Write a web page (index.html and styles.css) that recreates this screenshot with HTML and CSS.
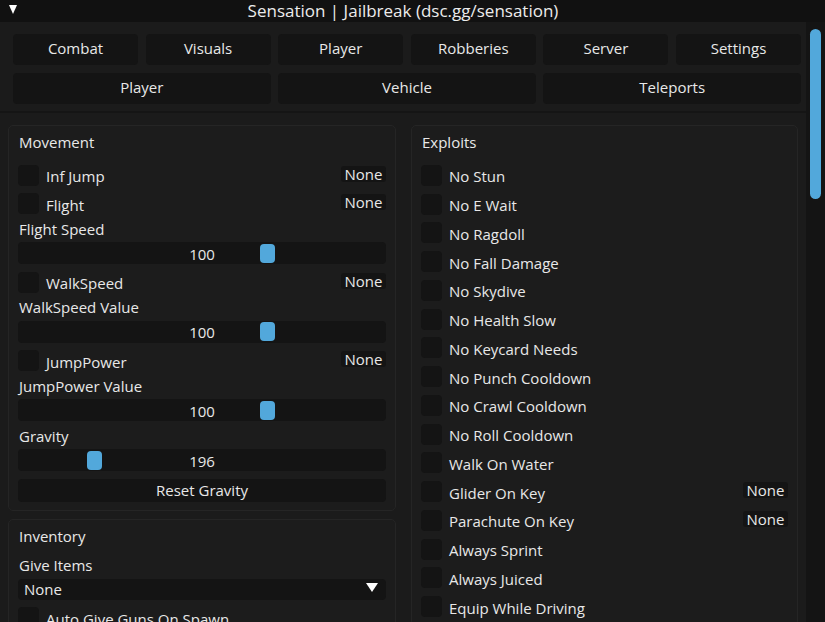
FILE: index.html
```html
<!DOCTYPE html>
<html>
<head>
<meta charset="utf-8">
<link rel="stylesheet" href="styles.css">
</head>
<body>
<div class="window">
  <div class="titlebar">
    <svg class="collapse" width="8" height="9" viewBox="0 0 8 9"><polygon points="0,0 8,0 4,9" fill="#fff"/></svg>
    <span class="title">Sensation | Jailbreak (dsc.gg/sensation)</span>
  </div>
  <div class="body">
    <div class="scroll">
      <div class="tabs">
        <div class="tabrow six">
          <div class="tab">Combat</div>
          <div class="tab">Visuals</div>
          <div class="tab">Player</div>
          <div class="tab">Robberies</div>
          <div class="tab">Server</div>
          <div class="tab">Settings</div>
        </div>
        <div class="tabrow three">
          <div class="tab">Player</div>
          <div class="tab">Vehicle</div>
          <div class="tab">Teleports</div>
        </div>
      </div>
      <div class="sep"></div>
      <div class="columns">
        <div class="col">
          <section class="panel left">
            <div class="ptitle">Movement</div>
            <div class="row"><span class="cb"></span><span class="lbl">Inf Jump</span><span class="key">None</span></div>
            <div class="row"><span class="cb"></span><span class="lbl">Flight</span><span class="key">None</span></div>
            <div class="label">Flight Speed</div>
            <div class="slider"><span class="thumb" style="left:242px"></span><span class="val">100</span></div>
            <div class="row"><span class="cb"></span><span class="lbl">WalkSpeed</span><span class="key">None</span></div>
            <div class="label">WalkSpeed Value</div>
            <div class="slider"><span class="thumb" style="left:242px"></span><span class="val">100</span></div>
            <div class="row"><span class="cb"></span><span class="lbl">JumpPower</span><span class="key">None</span></div>
            <div class="label">JumpPower Value</div>
            <div class="slider"><span class="thumb" style="left:242px"></span><span class="val">100</span></div>
            <div class="label">Gravity</div>
            <div class="slider"><span class="thumb" style="left:69px"></span><span class="val">196</span></div>
            <div class="button">Reset Gravity</div>
          </section>
          <section class="panel left">
            <div class="ptitle">Inventory</div>
            <div class="label">Give Items</div>
            <div class="dropdown"><span>None</span><svg width="12" height="9" viewBox="0 0 12 9"><polygon points="0,0 12,0 6,9" fill="#fff"/></svg></div>
            <div class="row"><span class="cb"></span><span class="lbl">Auto Give Guns On Spawn</span></div>
          </section>
        </div>
        <div class="col">
          <section class="panel right">
            <div class="ptitle">Exploits</div>
            <div class="row"><span class="cb"></span><span class="lbl">No Stun</span></div>
            <div class="row"><span class="cb"></span><span class="lbl">No E Wait</span></div>
            <div class="row"><span class="cb"></span><span class="lbl">No Ragdoll</span></div>
            <div class="row"><span class="cb"></span><span class="lbl">No Fall Damage</span></div>
            <div class="row"><span class="cb"></span><span class="lbl">No Skydive</span></div>
            <div class="row"><span class="cb"></span><span class="lbl">No Health Slow</span></div>
            <div class="row"><span class="cb"></span><span class="lbl">No Keycard Needs</span></div>
            <div class="row"><span class="cb"></span><span class="lbl">No Punch Cooldown</span></div>
            <div class="row"><span class="cb"></span><span class="lbl">No Crawl Cooldown</span></div>
            <div class="row"><span class="cb"></span><span class="lbl">No Roll Cooldown</span></div>
            <div class="row"><span class="cb"></span><span class="lbl">Walk On Water</span></div>
            <div class="row"><span class="cb"></span><span class="lbl">Glider On Key</span><span class="key">None</span></div>
            <div class="row"><span class="cb"></span><span class="lbl">Parachute On Key</span><span class="key">None</span></div>
            <div class="row"><span class="cb"></span><span class="lbl">Always Sprint</span></div>
            <div class="row"><span class="cb"></span><span class="lbl">Always Juiced</span></div>
            <div class="row"><span class="cb"></span><span class="lbl">Equip While Driving</span></div>
          </section>
        </div>
      </div>
    </div>
    <div class="scrollbar"><div class="sthumb"></div></div>
  </div>
</div>
</body>
</html>
```

FILE: styles.css
```css
* { box-sizing: border-box; }
html, body {
  margin: 0;
  padding: 0;
  width: 825px;
  height: 622px;
  overflow: hidden;
  background: #1b1b1b;
}
.window {
  width: 825px;
  height: 622px;
  display: flex;
  flex-direction: column;
  font-family: "Open Sans", "Liberation Sans", sans-serif;
  font-size: 15px;
  color: #e8e8e8;
  overflow: hidden;
}
.titlebar {
  height: 22px;
  flex: none;
  background: #111111;
  display: flex;
  align-items: center;
  position: relative;
  padding-right: 19px;
}
.collapse {
  position: absolute;
  left: 9px;
  top: 5px;
}
.title {
  flex: 1;
  text-align: center;
  font-size: 17px;
  line-height: 22px;
  color: #ececec;
}
.body {
  flex: 1;
  display: flex;
  min-height: 0;
}
.scroll {
  width: 806px;
  flex: none;
  background: #1b1b1b;
  overflow: hidden;
}
.tabs {
  padding: 11.5px 5px 0 13px;
  display: flex;
  flex-direction: column;
  gap: 8px;
}
.tabrow {
  display: grid;
  gap: 7.6px;
}
.tabrow.six { grid-template-columns: repeat(6, 1fr); }
.tabrow.three { grid-template-columns: repeat(3, 1fr); }
.tab {
  height: 31px;
  background: #141414;
  border-radius: 4px;
  display: flex;
  align-items: center;
  justify-content: center;
  font-size: 15px;
  padding-bottom: 3px;
}
.sep {
  height: 2px;
  margin-top: 7.5px;
  background: #151515;
}
.columns {
  display: grid;
  grid-template-columns: 388px 387px;
  gap: 15px;
  padding: 12px 0 0 8px;
}
.col {
  display: flex;
  flex-direction: column;
  gap: 8px;
}
.panel {
  border: 1px solid #252525;
  border-radius: 5px;
  background: #1c1c1c;
  padding: 8px 9px 8px 9px;
  display: flex;
  flex-direction: column;
  gap: 7.5px;
}
.panel.right { gap: 7.75px; }
.ptitle {
  line-height: 16px;
  height: 16px;
  padding-left: 1px;
  margin-bottom: 7px;
}
.row {
  height: 21px;
  display: flex;
  align-items: center;
  position: relative;
}
.cb {
  width: 21px;
  height: 21px;
  border-radius: 4px;
  background: #141414;
  flex: none;
}
.lbl {
  margin-left: 7px;
  padding-top: 2px;
  flex: 1;
}
.key {
  background: #141414;
  border-radius: 3px;
  height: 16px;
  width: 45px;
  line-height: 16px;
  text-align: center;
  align-self: flex-start;
  margin-top: 1px;
}
.label {
  height: 13px;
  line-height: 13px;
  padding-left: 1px;
  padding-top: 1px;
}
.slider {
  height: 22px;
  background: #141414;
  border-radius: 4px;
  position: relative;
  display: flex;
  align-items: center;
  justify-content: center;
}
.thumb {
  position: absolute;
  top: 1.5px;
  width: 15px;
  height: 19px;
  border-radius: 4px;
  background: #52a8db;
}
.val {
  position: relative;
  margin-top: 1px;
}
.button {
  height: 23px;
  background: #141414;
  border-radius: 4px;
  display: flex;
  align-items: center;
  justify-content: center;
}
.dropdown {
  height: 21px;
  background: #141414;
  border-radius: 4px;
  display: flex;
  align-items: center;
  justify-content: space-between;
  padding: 0 8px 0 6px;
}
.dropdown svg { margin-top: -4px; }
.scrollbar {
  flex: 1;
  background: #141414;
  padding: 7px 4px 0 4px;
}
.sthumb {
  width: 11px;
  height: 170px;
  border-radius: 6px;
  background: #52a8db;
}
```
